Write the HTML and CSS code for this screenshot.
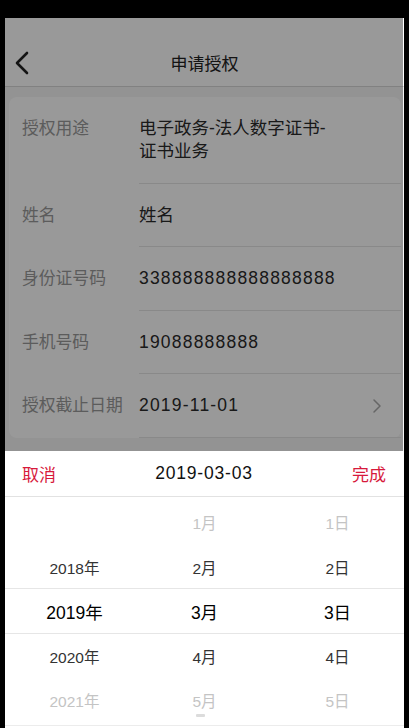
FILE: index.html
```html
<!DOCTYPE html>
<html lang="zh-CN">
<head>
<meta charset="utf-8">
<title>申请授权</title>
<link rel="stylesheet" href="styles.css">
</head>
<body>
<div class="screen">
  <header class="nav">
    <svg class="back" width="16" height="24" viewBox="0 0 16 24"><path d="M13 2 L3 12 L13 22" fill="none" stroke="#222" stroke-width="2.6" stroke-linecap="round" stroke-linejoin="round"/></svg>
    <h1 class="title">申请授权</h1>
  </header>
  <main class="content">
    <section class="card">
      <div class="row">
        <span class="label">授权用途</span>
        <div class="body"><span class="value wrap">电子政务-法人数字证书-证书业务</span></div>
      </div>
      <div class="row">
        <span class="label">姓名</span>
        <div class="body"><span class="value">姓名</span></div>
      </div>
      <div class="row">
        <span class="label">身份证号码</span>
        <div class="body"><span class="value num">338888888888888888</span></div>
      </div>
      <div class="row">
        <span class="label">手机号码</span>
        <div class="body"><span class="value num">19088888888</span></div>
      </div>
      <div class="row">
        <span class="label">授权截止日期</span>
        <div class="body"><span class="value num">2019-11-01</span>
          <svg class="arrow" width="10" height="16" viewBox="0 0 10 16"><path d="M2 2 L8 8 L2 14" fill="none" stroke="#aaa" stroke-width="1.5" stroke-linecap="round" stroke-linejoin="round"/></svg>
        </div>
      </div>
    </section>
  </main>
  <div class="mask"></div>
  <div class="sheet">
    <div class="sheet-head">
      <span class="action">取消</span>
      <span class="current num">2019-03-03</span>
      <span class="action">完成</span>
    </div>
    <div class="wheel">
      <div class="band"></div>
      <div class="col years">
        <span class="item"></span>
        <span class="item near">2018年</span>
        <span class="item sel">2019年</span>
        <span class="item near">2020年</span>
        <span class="item far">2021年</span>
      </div>
      <div class="col">
        <span class="item far">1月</span>
        <span class="item near">2月</span>
        <span class="item sel">3月</span>
        <span class="item near">4月</span>
        <span class="item far">5月</span>
      </div>
      <div class="col">
        <span class="item far">1日</span>
        <span class="item near">2日</span>
        <span class="item sel">3日</span>
        <span class="item near">4日</span>
        <span class="item far">5日</span>
      </div>
      <div class="indicator"></div>
    </div>
  </div>
</div>
</body>
</html>
```

FILE: styles.css
```css
* { box-sizing: border-box; }
html, body {
  margin: 0;
  padding: 0;
  background: #000;
}
body {
  font-family: "Liberation Sans", "Noto Sans CJK SC", sans-serif;
  padding: 18px 5px 0 5px;
}
.screen {
  position: relative;
  width: 399px;
  height: 710px;
  background: #fff;
  overflow: hidden;
  display: flex;
  flex-direction: column;
}
.nav {
  height: 69px;
  flex: none;
  padding-top: 20px;
  display: flex;
  align-items: center;
  justify-content: center;
  position: relative;
  background: #fff;
  border-bottom: 1px solid #d8d8d8;
}
.back {
  position: absolute;
  left: 9px;
  top: 33px;
}
.title {
  margin: 0;
  font-size: 17px;
  font-weight: normal;
  color: #222;
}
.content {
  flex: 1;
  background: #f5f5f5;
  padding-top: 10px;
}
.card {
  background: #fff;
  margin: 0 3px 0 4px;
  border-radius: 8px;
}
.row {
  display: flex;
  align-items: flex-start;
}
.label {
  width: 130px;
  flex: none;
  padding: 20px 0 0 13px;
  font-size: 16.8px;
  line-height: 23px;
  color: #999;
}
.body {
  flex: 1;
  display: flex;
  align-items: center;
  padding: 20px 19px 19.5px 0;
  border-bottom: 1px solid #e4e4e4;
}
.value {
  flex: 1;
  font-size: 17.5px;
  line-height: 23px;
  color: #2a2a2a;
}
.wrap {
  max-width: 200px;
}
.num {
  letter-spacing: 1.2px;
}
.arrow {
  flex: none;
}
.mask {
  position: absolute;
  top: 0;
  left: 0;
  right: 1px;
  bottom: 0;
  background: rgba(0, 0, 0, 0.4);
}
.sheet {
  position: absolute;
  left: 0;
  right: 0;
  bottom: 0;
  height: 277px;
  background: #fff;
}
.sheet-head {
  height: 46px;
  display: flex;
  align-items: center;
  justify-content: space-between;
  padding: 0 18px 0 17px;
  border-bottom: 1px solid #e2e2e2;
}
.action {
  font-size: 17px;
  color: #d71a3c;
}
.current {
  font-size: 17.5px;
  color: #111;
  letter-spacing: 0.8px;
}
.wheel {
  position: relative;
  height: 229px;
  padding-top: 3px;
  display: grid;
  grid-template-columns: 1fr 1fr 1fr;
  border-bottom: 1px solid #ececec;
}
.band {
  position: absolute;
  left: 0;
  right: 0;
  top: 91px;
  height: 46px;
  border-top: 1px solid #e6e6e6;
  border-bottom: 1px solid #e6e6e6;
}
.col {
  display: flex;
  flex-direction: column;
  align-items: center;
}
.years {
  padding-left: 6px;
}
.item {
  height: 44.5px;
  display: flex;
  align-items: center;
  font-size: 15.5px;
  color: #333;
}
.item.sel {
  font-size: 17.5px;
  color: #000;
}
.item.far {
  color: #c4c4c4;
}
.indicator {
  position: absolute;
  left: 191px;
  top: 217px;
  width: 9px;
  height: 3px;
  border-radius: 1px;
  background: #dcdcdc;
}
```
